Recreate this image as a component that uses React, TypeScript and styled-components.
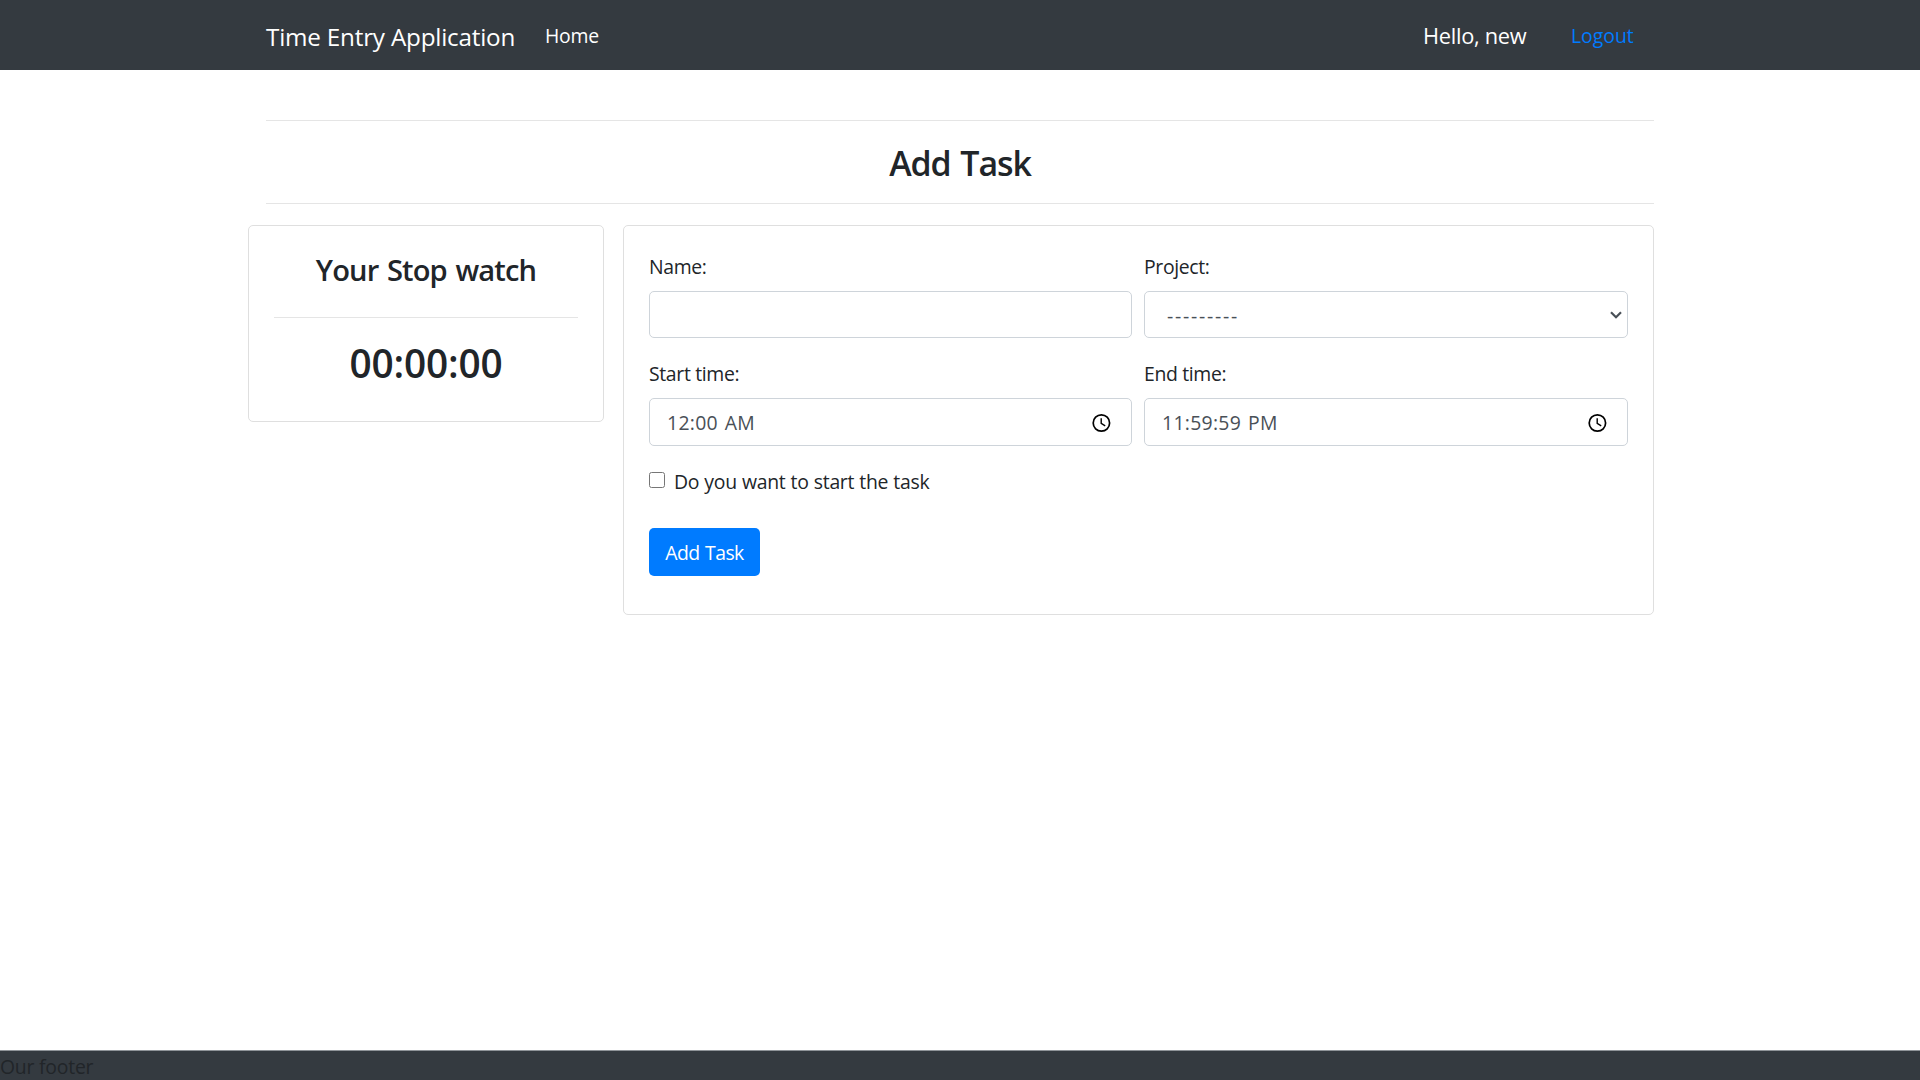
import React from "react";
import styled, { createGlobalStyle } from "styled-components";

const GlobalStyle = createGlobalStyle`
  *, *::before, *::after { box-sizing: border-box; }
  body {
    margin: 0;
    background: #fff;
    color: #212529;
    font-family: "Open Sans", "Noto Sans", sans-serif;
    font-size: 19.4px;
    line-height: 31px;
    letter-spacing: -0.22px;
    overflow: hidden;
  }
  h1, h2, h3 { margin: 0; font-weight: 550; text-align: center; white-space: nowrap; }
`;

const Page = styled.div`
  display: flex;
  flex-direction: column;
  height: 100vh;
`;

const Navbar = styled.nav`
  height: 70px;
  flex: none;
  background: #343a40;
`;

const Container = styled.div`
  width: 1388px;
  margin: 0 auto;
`;

const NavInner = styled(Container)`
  display: flex;
  align-items: center;
  height: 70px;
  color: #fff;
  white-space: nowrap;
`;

const Brand = styled.a`
  width: 279px;
  padding-top: 3px;
  font-size: 24.25px;
  letter-spacing: -0.21px;
`;

const NavLink = styled.a<{ $primary?: boolean }>`
  padding-top: 1px;
  letter-spacing: ${(p) => (p.$primary ? 0 : -0.2)}px;
  color: ${(p) => (p.$primary ? "#007bff" : "#fff")};
`;

const NavRight = styled.div`
  display: flex;
  align-items: center;
  margin-left: auto;
  width: 232px;
`;

const Greeting = styled.span`
  width: 149px;
  padding: 1px 0 0 1px;
  font-size: 21.8px;
  letter-spacing: -0.28px;
`;

const Rule = styled.hr`
  height: 1px;
  margin: 0;
  border: 0;
  background: #e5e5e5;
`;

const Header = styled(Container)`
  margin-top: 50px;
`;

const PageTitle = styled.h2`
  height: 82px;
  padding-top: 20px;
  font-size: 33.95px;
  line-height: 44px;
  letter-spacing: -1.1px;
  word-spacing: 2px;
`;

const Columns = styled.div`
  display: flex;
  align-items: flex-start;
  gap: 19px;
  width: 1406px;
  margin: 21px 0 0 248px;
`;

const Card = styled.section`
  border: 1px solid #dfdfdf;
  border-radius: 5px;
  padding: 25px;
`;

const WatchCard = styled(Card)`
  width: 356px;
  height: 197px;
`;

const WatchTitle = styled.h3`
  height: 66px;
  font-size: 29.1px;
  line-height: 38px;
  letter-spacing: -0.88px;
  word-spacing: 2px;
`;

const WatchTime = styled.h1`
  padding-top: 20px;
  font-size: 38.8px;
  line-height: 51px;
  letter-spacing: -0.2px;
`;

const FormCard = styled(Card)`
  width: 1031px;
  height: 390px;
`;

const Fields = styled.div`
  display: grid;
  grid-template-columns: 483px 484px;
  gap: 20px 12px;
`;

const Field = styled.div`
  display: flex;
  flex-direction: column;
  gap: 10px;
`;

const Label = styled.label`
  height: 30px;
  letter-spacing: -0.34px;
`;

const Control = styled.div<{ $height: number; $spacing?: number; $inset?: number; $end?: number }>`
  display: flex;
  align-items: center;
  justify-content: space-between;
  height: ${(p) => p.$height}px;
  padding: 1px ${(p) => p.$end ?? 20}px 0 ${(p) => p.$inset ?? 17}px;
  border: 1px solid #ced4da;
  border-radius: 5px;
  color: #495057;
  letter-spacing: ${(p) => p.$spacing ?? 0}px;
  svg { flex: none; }
`;

const TimeValue = styled.span`
  word-spacing: 1.5px;
`;

const CheckRow = styled.label`
  display: flex;
  gap: 9px;
  height: 30px;
  margin-top: 20px;
  letter-spacing: -0.3px;
  word-spacing: 0.5px;
`;

const Checkbox = styled.input`
  width: 16px;
  height: 16px;
  margin: 6px 0 0;
`;

const SubmitButton = styled.button`
  display: block;
  width: 111px;
  height: 48px;
  margin-top: 32px;
  padding: 1px 0 0;
  border: 0;
  border-radius: 5px;
  background: #007bff;
  color: #fff;
  font: inherit;
  letter-spacing: -0.55px;
  word-spacing: 1px;
`;

const Footer = styled.footer`
  height: 30px;
  margin-top: auto;
  border-top: 1px solid #8f9499;
  background: #343a40;
`;

const ClockIcon = () => (
  <svg width="20" height="20" viewBox="0 0 20 20" fill="none" stroke="#000">
    <circle cx="10.4" cy="10" r="8.2" strokeWidth="1.7" />
    <path d="M10.2 5.2v5.2l4 2.4" strokeWidth="1.4" />
  </svg>
);

const ChevronIcon = () => (
  <svg width="12" height="8" viewBox="0 0 12 8" fill="none" stroke="#495057" strokeWidth="2.2">
    <path d="M1 1.2l5 5 5-5" />
  </svg>
);

export default function App() {
  return (
    <Page>
      <GlobalStyle />
      <Navbar>
        <NavInner>
          <Brand>Time Entry Application</Brand>
          <NavLink>Home</NavLink>
          <NavRight>
            <Greeting>Hello, new</Greeting>
            <NavLink $primary>Logout</NavLink>
          </NavRight>
        </NavInner>
      </Navbar>
      <Header>
        <Rule />
        <PageTitle>Add Task</PageTitle>
        <Rule />
      </Header>
      <Columns>
        <WatchCard>
          <WatchTitle>Your Stop watch</WatchTitle>
          <Rule />
          <WatchTime>00:00:00</WatchTime>
        </WatchCard>
        <FormCard>
          <Fields>
            <Field>
              <Label>Name:</Label>
              <Control $height={47} />
            </Field>
            <Field>
              <Label>Project:</Label>
              <Control $height={47} $inset={22} $end={5} $spacing={1.75}>
                <span>---------</span>
                <ChevronIcon />
              </Control>
            </Field>
            <Field>
              <Label>Start time:</Label>
              <Control $height={48} $spacing={0.3}>
                <TimeValue>12:00 AM</TimeValue>
                <ClockIcon />
              </Control>
            </Field>
            <Field>
              <Label>End time:</Label>
              <Control $height={48} $spacing={0.3}>
                <TimeValue>11:59:59 PM</TimeValue>
                <ClockIcon />
              </Control>
            </Field>
          </Fields>
          <CheckRow>
            <Checkbox type="checkbox" />
            Do you want to start the task
          </CheckRow>
          <SubmitButton type="button">Add Task</SubmitButton>
        </FormCard>
      </Columns>
      <Footer>Our footer</Footer>
    </Page>
  );
}
